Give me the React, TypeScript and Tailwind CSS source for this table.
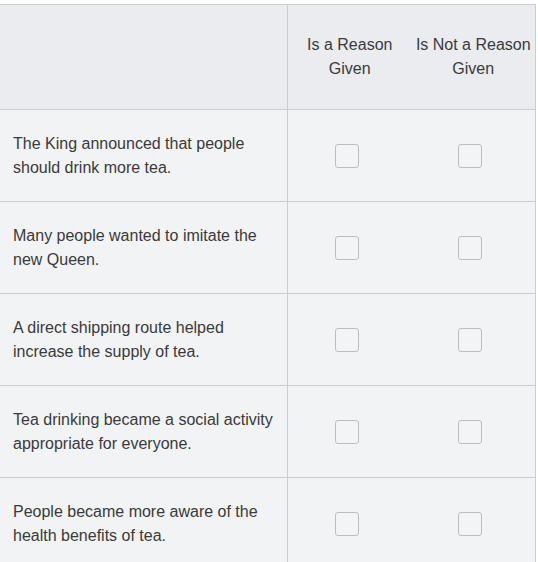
import React from 'react'

const statements = [
  'The King announced that people should drink more tea.',
  'Many people wanted to imitate the new Queen.',
  'A direct shipping route helped increase the supply of tea.',
  'Tea drinking became a social activity appropriate for everyone.',
  'People became more aware of the health benefits of tea.',
]

function Box() {
  return (
    <span className="block w-[24px] h-[24px] mr-[6px] rounded-[3px] border border-[#bdbdbd] bg-[#f3f4f6]" />
  )
}

export default function App() {
  return (
    <div className="min-h-screen bg-white pt-[4px] text-[16px] leading-[24px] text-[#3a3a3a]" style={{ fontFamily: '"Liberation Sans", Arial, sans-serif' }}>
      <div className="w-[536px] border-t border-r border-[#cdcdcd]">
        <div className="grid grid-cols-[288px_1fr_1fr] h-[105px] bg-[#ebecef] border-b border-[#cdcdcd]">
          <div className="border-r border-[#cdcdcd]" />
          <div className="flex items-center justify-center text-center">
            Is a Reason
            <br />
            Given
          </div>
          <div className="flex items-center justify-center text-center">
            Is Not a Reason
            <br />
            Given
          </div>
        </div>
        {statements.map((s) => (
          <div key={s} className="grid grid-cols-[288px_1fr_1fr] h-[92px] bg-[#f2f3f5] border-b border-[#cdcdcd]">
            <div className="flex items-center pl-[13px] pr-[4px] border-r border-[#cdcdcd]">{s}</div>
            <div className="flex items-center justify-center pt-[1px]">
              <Box />
            </div>
            <div className="flex items-center justify-center pt-[1px]">
              <Box />
            </div>
          </div>
        ))}
      </div>
    </div>
  )
}
